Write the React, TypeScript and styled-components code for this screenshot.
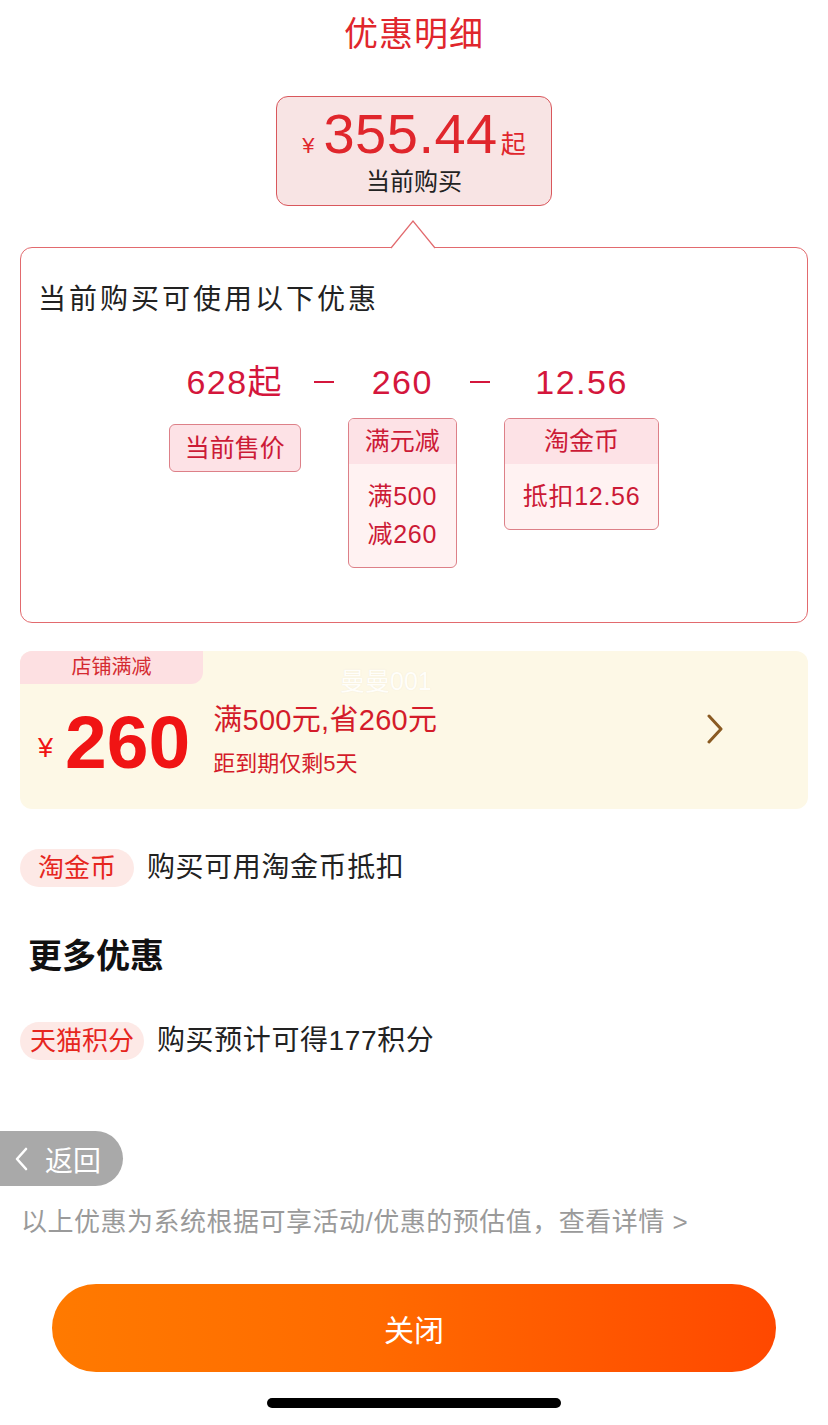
import React from 'react';
import styled, { createGlobalStyle } from 'styled-components';

const GlobalStyle = createGlobalStyle`
 body {
  margin: 0;
  background: #ffffff;
  font-family: "Liberation Sans", "Noto Sans CJK SC", sans-serif;
 }
`;

function Term(props: { value: string; tag: string; lines?: string[]; offset?: number }) {
 return (
  <TermColumn>
   <TermValue>{props.value}</TermValue>
   {props.lines ? (
    <TermTag>
     <TermTagHead>{props.tag}</TermTagHead>
     <TermTagBody>
      {props.lines.map((l) => (
       <div key={l}>{l}</div>
      ))}
     </TermTagBody>
    </TermTag>
   ) : (
    <SimpleTag offset={props.offset}>{props.tag}</SimpleTag>
   )}
  </TermColumn>
 );
}

function App() {
 return (
  <Page>
   <GlobalStyle />
   <Title>优惠明细</Title>

   <PriceBox>
    <PriceLine>
     <Yen>¥</Yen>
     <Amount>355.44</Amount>
     <Qi>起</Qi>
    </PriceLine>
    <PriceLabel>当前购买</PriceLabel>
   </PriceBox>

   <DetailCard>
    <Notch width="44" height="29" viewBox="0 0 44 29">
     <polygon points="0,28.5 22,1 44,28.5" fill="#ffffff" />
     <polyline points="0,28 22,1 44,28" fill="none" stroke="#e26a6e" strokeWidth="1.2" />
    </Notch>
    <CardHeading>当前购买可使用以下优惠</CardHeading>
    <Formula>
     <Term value="628起" tag="当前售价" offset={6} />
     <Minus><span /></Minus>
     <Term value="260" tag="满元减" lines={['满500', '减260']} />
     <Minus><span /></Minus>
     <Term value="12.56" tag="淘金币" lines={['抵扣12.56']} />
    </Formula>
   </DetailCard>

   <Coupon>
    <CouponTop>
     <CouponTag>店铺满减</CouponTag>
     <Watermark>曼曼001</Watermark>
    </CouponTop>
    <CouponBody>
     <CouponYen>¥</CouponYen>
     <CouponAmount>260</CouponAmount>
     <CouponInfo>
      <CouponRule>满500元,省260元</CouponRule>
      <CouponExpire>距到期仅剩5天</CouponExpire>
     </CouponInfo>
     <Chevron width="18" height="30" viewBox="0 0 18 30">
      <polyline points="3,2 15,15 3,28" fill="none" stroke="#8a5a22" strokeWidth="3" strokeLinecap="round" strokeLinejoin="round" />
     </Chevron>
    </CouponBody>
   </Coupon>

   <BenefitRow>
    <Pill>淘金币</Pill>
    <BenefitText>购买可用淘金币抵扣</BenefitText>
   </BenefitRow>

   <SectionTitle>更多优惠</SectionTitle>

   <BenefitRow>
    <Pill>天猫积分</Pill>
    <BenefitText>购买预计可得177积分</BenefitText>
   </BenefitRow>

   <BackPill>
    <svg width="14" height="24" viewBox="0 0 14 24">
     <polyline points="12,2 3,12 12,22" fill="none" stroke="#ffffff" strokeWidth="2.6" strokeLinecap="round" strokeLinejoin="round" />
    </svg>
    <span>返回</span>
   </BackPill>

   <Footnote>以上优惠为系统根据可享活动/优惠的预估值，查看详情 &gt;</Footnote>

   <CloseButton>关闭</CloseButton>
   <HomeBar />
  </Page>
 );
}

export default App;

/* Styled Components */

const Page = styled.div`
 width: 828px;
 height: 1425px;
 box-sizing: border-box;
 padding-top: 17px;
 display: flex;
 flex-direction: column;
 align-items: stretch;
 overflow: hidden;
`;

const Title = styled.h1`
 margin: 0;
 text-align: center;
 font-size: 34px;
 line-height: 34px;
 font-weight: 400;
 color: #e0262c;
 letter-spacing: 1px;
`;

const PriceBox = styled.div`
 align-self: center;
 margin-top: 45px;
 width: 276px;
 height: 110px;
 box-sizing: border-box;
 padding-top: 9px;
 border: 1px solid #d9575c;
 border-radius: 12px;
 background: #f8e4e4;
 display: flex;
 flex-direction: column;
 align-items: center;
`;

const PriceLine = styled.div`
 display: flex;
 align-items: baseline;
 color: #e0262c;
 height: 56px;
`;

const Yen = styled.span`
 font-size: 22px;
 margin-right: 9px;
`;

const Amount = styled.span`
 font-size: 56px;
 line-height: 56px;
 letter-spacing: 0.5px;
`;

const Qi = styled.span`
 font-size: 25px;
 margin-left: 3px;
`;

const PriceLabel = styled.div`
 margin-top: 5px;
 font-size: 24px;
 line-height: 30px;
 color: #222222;
`;

const DetailCard = styled.div`
 position: relative;
 margin: 41px 20px 0;
 height: 376px;
 box-sizing: border-box;
 border: 1px solid #e26a6e;
 border-radius: 12px;
 padding: 37px 0 0 17px;
`;

const Notch = styled.svg`
 position: absolute;
 top: -28px;
 left: calc(50% - 23px);
 overflow: visible;
`;

const CardHeading = styled.div`
 font-size: 28px;
 line-height: 30px;
 color: #222222;
 letter-spacing: 3px;
`;

const Formula = styled.div`
 display: flex;
 justify-content: center;
 margin-top: 45px;
 margin-right: 17px;
`;

const TermColumn = styled.div`
 display: flex;
 flex-direction: column;
 align-items: center;
`;

const TermValue = styled.div`
 font-size: 34px;
 line-height: 44px;
 color: #d4163c;
 letter-spacing: 1.5px;
`;

const SimpleTag = styled.div<{ offset?: number }>`
 margin-top: ${(p) => 14 + (p.offset || 0)}px;
 height: 48px;
 box-sizing: border-box;
 padding: 0 15px;
 border: 1px solid #dd8088;
 border-radius: 6px;
 background: #fde2e6;
 color: #cc1a36;
 font-size: 25px;
 line-height: 46px;
`;

const TermTag = styled.div`
 margin-top: 14px;
 border: 1px solid #dd8088;
 border-radius: 6px;
 overflow: hidden;
 background: #fff2f2;
 color: #cc1a36;
 text-align: center;
`;

const TermTagHead = styled.div`
 height: 45px;
 background: #fde2e6;
 font-size: 25px;
 line-height: 45px;
 padding: 0 16px;
`;

const TermTagBody = styled.div`
 padding: 13px 18px 14px;
 font-size: 25px;
 line-height: 38px;
 letter-spacing: 0.7px;
`;

const Minus = styled.div`
 width: 47px;
 height: 44px;
 display: flex;
 align-items: center;
 justify-content: center;

 span {
  display: block;
  width: 20px;
  height: 2px;
  background: #d4163c;
 }
`;

const Coupon = styled.div`
 margin: 28px 20px 0;
 height: 158px;
 border-radius: 12px;
 background: #fdf8e6;
 display: flex;
 flex-direction: column;
 overflow: hidden;
`;

const CouponTop = styled.div`
 display: flex;
 align-items: flex-start;
 height: 33px;
`;

const CouponTag = styled.div`
 width: 183px;
 height: 33px;
 background: #fde0e2;
 border-radius: 0 0 12px 0;
 color: #d42a30;
 font-size: 20px;
 line-height: 33px;
 text-align: center;
`;

const Watermark = styled.div`
 margin: 16px 0 0 137px;
 font-size: 25px;
 line-height: 28px;
 color: #fffefa;
 text-shadow: 0 0 1px rgba(170, 150, 120, 0.18);
`;

const CouponBody = styled.div`
 flex: 1;
 display: flex;
 align-items: center;
 padding: 0 84px 10px 18px;
`;

const CouponYen = styled.span`
 align-self: center;
 margin-top: 14px;
 font-size: 27px;
 color: #f01414;
`;

const CouponAmount = styled.span`
 margin-left: 12px;
 font-size: 75px;
 font-weight: 700;
 line-height: 76px;
 color: #f01414;
`;

const CouponInfo = styled.div`
 margin-left: 23px;
 display: flex;
 flex-direction: column;
 margin-top: -4px;
`;

const CouponRule = styled.div`
 font-size: 29px;
 line-height: 36px;
 color: #d41c2a;
 letter-spacing: 0.3px;
`;

const CouponExpire = styled.div`
 margin-top: 12px;
 font-size: 22px;
 line-height: 28px;
 color: #d41c2a;
`;

const Chevron = styled.svg`
 margin-left: auto;
 margin-top: -26px;
`;

const BenefitRow = styled.div`
 display: flex;
 align-items: center;
 margin: 40px 20px 0;
 gap: 13px;

 & + h2 {
  margin-top: 49px;
 }
 h2 + & {
  margin-top: 46px;
 }
`;

const Pill = styled.div`
 min-width: 114px;
 height: 38px;
 box-sizing: border-box;
 padding: 0 10px;
 border-radius: 19px;
 background: #fde9e6;
 color: #e6261e;
 font-size: 26px;
 line-height: 38px;
 text-align: center;
`;

const BenefitText = styled.div`
 font-size: 28px;
 line-height: 38px;
 color: #222222;
 letter-spacing: 0.6px;
`;

const SectionTitle = styled.h2`
 margin: 0 0 0 28px;
 font-size: 34px;
 line-height: 40px;
 font-weight: 700;
 color: #111111;
`;

const BackPill = styled.div`
 margin-top: 71px;
 align-self: flex-start;
 width: 123px;
 height: 55px;
 box-sizing: border-box;
 padding-left: 14px;
 border-radius: 0 28px 28px 0;
 background: #a9a9a9;
 display: flex;
 align-items: center;
 gap: 17px;
 color: #ffffff;
 font-size: 28px;
`;

const Footnote = styled.div`
 margin: 21px 0 0 21px;
 font-size: 26px;
 line-height: 30px;
 color: #9a9a9a;
 letter-spacing: 0.5px;
`;

const CloseButton = styled.button`
 margin: 47px 52px 0;
 height: 88px;
 border: none;
 border-radius: 44px;
 background: linear-gradient(90deg, #ff7a00 0%, #ff6a00 45%, #ff4800 100%);
 color: #ffffff;
 font-family: inherit;
 font-size: 30px;
 cursor: pointer;
`;

const HomeBar = styled.div`
 align-self: center;
 margin-top: 26px;
 width: 294px;
 height: 10px;
 border-radius: 5px;
 background: #000000;
`;
